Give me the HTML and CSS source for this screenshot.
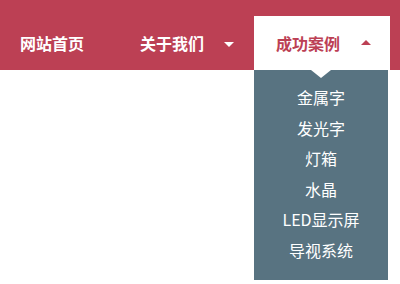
FILE: index.html
```html
<!DOCTYPE html>
<html lang="zh">
<head>
<meta charset="utf-8">
<title>导航</title>
<link rel="stylesheet" href="styles.css">
</head>
<body>
<div class="page">
  <div class="nav">
    <a class="item item-home" href="#">网站首页</a>
    <a class="item item-sub" href="#">关于我们<span class="caret caret-down"></span></a>
    <div class="menu">
      <a class="item item-sub active-link" href="#">成功案例<span class="caret caret-up"></span></a>
      <div class="cases">
        <span class="notch"></span>
        <a class="case" href="#">金属字</a>
        <a class="case" href="#">发光字</a>
        <a class="case" href="#">灯箱</a>
        <a class="case" href="#">水晶</a>
        <a class="case" href="#">LED显示屏</a>
        <a class="case" href="#">导视系统</a>
      </div>
    </div>
  </div>
</div>
</body>
</html>
```
FILE: styles.css
```css
html, body {
  margin: 0;
  padding: 0;
  background: #ffffff;
  font-family: "Noto Sans CJK SC", "Microsoft YaHei", sans-serif;
}
a {
  text-decoration: none;
  color: inherit;
}
.page {
  background: linear-gradient(to bottom, #bc4054 0, #bc4054 70px, #ffffff 70px);
  min-height: 284px;
}
.nav {
  display: flex;
  align-items: flex-start;
  padding-top: 16px;
}
.item {
  display: flex;
  align-items: center;
  height: 54px;
  font-size: 16px;
  font-weight: bold;
  color: #ffffff;
  box-sizing: border-box;
}
.item-home {
  width: 118px;
  padding-left: 20px;
}
.item-sub {
  width: 136px;
  padding-left: 22px;
}
.menu {
  display: flex;
  flex-direction: column;
  width: 136px;
}
.active-link {
  background: #ffffff;
  color: #bc4054;
}
.caret {
  display: block;
  width: 0;
  height: 0;
  margin-left: 20px;
  border-left: 5px solid transparent;
  border-right: 5px solid transparent;
}
.caret-down {
  border-top: 5px solid #ffffff;
  margin-top: 3px;
}
.caret-up {
  border-bottom: 5px solid #bc4054;
  margin-top: -1px;
  margin-left: 21px;
}
.cases {
  position: relative;
  width: 134px;
  padding: 12px 0 15px;
  background: #587381;
  color: #ffffff;
  display: flex;
  flex-direction: column;
  align-items: center;
}
.notch {
  position: absolute;
  top: 0;
  left: 57px;
  width: 0;
  height: 0;
  border-left: 10px solid transparent;
  border-right: 10px solid transparent;
  border-top: 8px solid #ffffff;
}
.case {
  display: block;
  line-height: 30.5px;
  font-size: 16px;
}
```
